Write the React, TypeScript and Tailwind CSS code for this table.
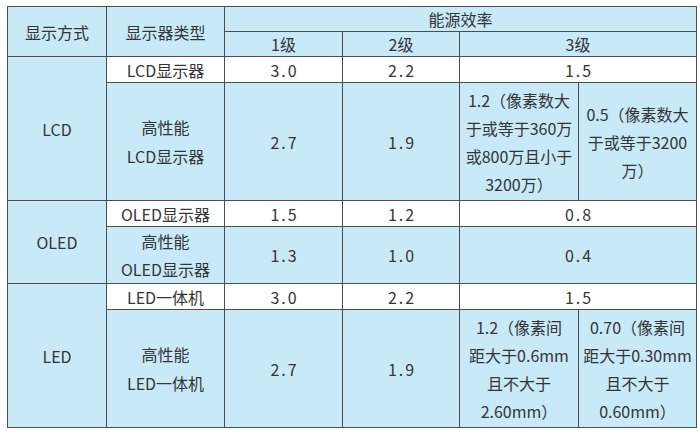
import React from "react";

const blue = "bg-[#c7e9f8]";
const cell = "border border-[#4d4d4d] text-center align-middle p-0";
const num = "tracking-[2px] pl-[2px]";

function Td({
  children,
  className = "",
  rowSpan,
  colSpan,
}: {
  children?: React.ReactNode;
  className?: string;
  rowSpan?: number;
  colSpan?: number;
}) {
  return (
    <td rowSpan={rowSpan} colSpan={colSpan} className={`${cell} ${className}`}>
      {children}
    </td>
  );
}

export default function App() {
  return (
    <div
      className="w-[700px] h-[431px] bg-white overflow-hidden pt-[6px] pl-[7px] text-[#353535] text-[16px]"
      style={{ fontFamily: '"Noto Sans CJK SC", "Noto Sans", sans-serif' }}
    >
      <table className="table-fixed border-collapse w-[689px]">
        <colgroup>
          <col className="w-[99px]" />
          <col className="w-[118px]" />
          <col className="w-[118px]" />
          <col className="w-[117px]" />
          <col className="w-[119px]" />
          <col className="w-[118px]" />
        </colgroup>
        <tbody>
          {/* header */}
          <tr className="h-[25px]">
            <Td rowSpan={2} className={blue}>显示方式</Td>
            <Td rowSpan={2} className={blue}>显示器类型</Td>
            <Td colSpan={4} className={blue}>能源效率</Td>
          </tr>
          <tr className="h-[25px]">
            <Td className={blue}>1级</Td>
            <Td className={blue}>2级</Td>
            <Td colSpan={2} className={blue}>3级</Td>
          </tr>

          {/* LCD */}
          <tr className="h-[26px]">
            <Td rowSpan={2} className={blue}>LCD</Td>
            <Td className="bg-white">LCD显示器</Td>
            <Td className={`bg-white ${num}`}>3.0</Td>
            <Td className={`bg-white ${num}`}>2.2</Td>
            <Td colSpan={2} className={`bg-white ${num}`}>1.5</Td>
          </tr>
          <tr className="h-[118px]">
            <Td className={`${blue} leading-[29px]`}>
              高性能
              <br />
              LCD显示器
            </Td>
            <Td className={`${blue} ${num}`}>2.7</Td>
            <Td className={`${blue} ${num}`}>1.9</Td>
            <Td className={`${blue} leading-[28px]`}>
              1.2（像素数大
              <br />
              于或等于360万
              <br />
              或800万且小于
              <br />
              3200万）
            </Td>
            <Td className={`${blue} leading-[28px]`}>
              0.5（像素数大
              <br />
              于或等于3200
              <br />
              万）
            </Td>
          </tr>

          {/* OLED */}
          <tr className="h-[26px]">
            <Td rowSpan={2} className={blue}>OLED</Td>
            <Td className="bg-white">OLED显示器</Td>
            <Td className={`bg-white ${num}`}>1.5</Td>
            <Td className={`bg-white ${num}`}>1.2</Td>
            <Td colSpan={2} className={`bg-white ${num}`}>0.8</Td>
          </tr>
          <tr className="h-[56px]">
            <Td className={`${blue} leading-[28px]`}>
              高性能
              <br />
              OLED显示器
            </Td>
            <Td className={`${blue} ${num}`}>1.3</Td>
            <Td className={`${blue} ${num}`}>1.0</Td>
            <Td colSpan={2} className={`${blue} ${num}`}>0.4</Td>
          </tr>

          {/* LED */}
          <tr className="h-[26px]">
            <Td rowSpan={2} className={blue}>LED</Td>
            <Td className="bg-white">LED一体机</Td>
            <Td className={`bg-white ${num}`}>3.0</Td>
            <Td className={`bg-white ${num}`}>2.2</Td>
            <Td colSpan={2} className={`bg-white ${num}`}>1.5</Td>
          </tr>
          <tr className="h-[118px]">
            <Td className={`${blue} leading-[29px]`}>
              高性能
              <br />
              LED一体机
            </Td>
            <Td className={`${blue} ${num}`}>2.7</Td>
            <Td className={`${blue} ${num}`}>1.9</Td>
            <Td className={`${blue} leading-[28px]`}>
              1.2（像素间
              <br />
              距大于0.6mm
              <br />
              且不大于
              <br />
              2.60mm）
            </Td>
            <Td className={`${blue} leading-[28px]`}>
              0.70（像素间
              <br />
              距大于0.30mm
              <br />
              且不大于
              <br />
              0.60mm）
            </Td>
          </tr>
        </tbody>
      </table>
    </div>
  );
}
